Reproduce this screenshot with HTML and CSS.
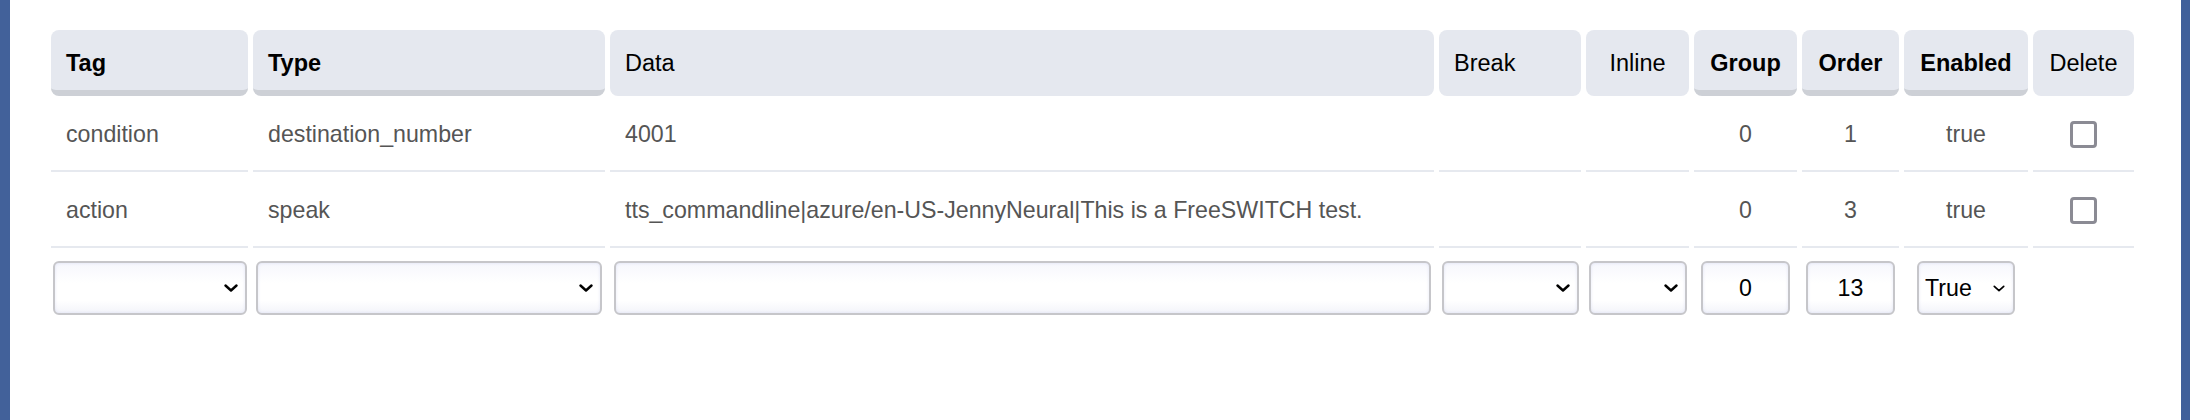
FILE: index.html
```html
<!DOCTYPE html>
<html lang="en">
<head>
<meta charset="utf-8">
<title>Dialplan details</title>
<link rel="stylesheet" href="styles.css">
</head>
<body>
<div class="frame">
  <div class="grid">
    <div class="th sort">Tag</div>
    <div class="th sort">Type</div>
    <div class="th">Data</div>
    <div class="th">Break</div>
    <div class="th center">Inline</div>
    <div class="th sort center">Group</div>
    <div class="th sort center">Order</div>
    <div class="th sort center">Enabled</div>
    <div class="th center">Delete</div>

    <div class="td">condition</div>
    <div class="td">destination_number</div>
    <div class="td">4001</div>
    <div class="td"></div>
    <div class="td"></div>
    <div class="td center">0</div>
    <div class="td center">1</div>
    <div class="td center">true</div>
    <div class="td center"><input class="check" type="checkbox"></div>

    <div class="td">action</div>
    <div class="td">speak</div>
    <div class="td">tts_commandline|azure/en-US-JennyNeural|This is a FreeSWITCH test.</div>
    <div class="td"></div>
    <div class="td"></div>
    <div class="td center">0</div>
    <div class="td center">3</div>
    <div class="td center">true</div>
    <div class="td center"><input class="check" type="checkbox"></div>

    <div class="ti"><span class="sel w-tag"><select class="field"><option></option></select><svg class="chev" viewBox="0 0 14 8"><path d="M1.5 1.5 L7 6.5 L12.5 1.5"/></svg></span></div>
    <div class="ti"><span class="sel w-type"><select class="field"><option></option></select><svg class="chev" viewBox="0 0 14 8"><path d="M1.5 1.5 L7 6.5 L12.5 1.5"/></svg></span></div>
    <div class="ti"><input class="field w-data" type="text"></div>
    <div class="ti"><span class="sel w-break"><select class="field"><option></option></select><svg class="chev" viewBox="0 0 14 8"><path d="M1.5 1.5 L7 6.5 L12.5 1.5"/></svg></span></div>
    <div class="ti"><span class="sel w-inline"><select class="field"><option></option></select><svg class="chev" viewBox="0 0 14 8"><path d="M1.5 1.5 L7 6.5 L12.5 1.5"/></svg></span></div>
    <div class="ti"><input class="field num w-group" type="text" value="0"></div>
    <div class="ti"><input class="field num w-order" type="text" value="13"></div>
    <div class="ti"><span class="sel w-enabled"><select class="field small"><option>True</option></select><svg class="chev sm" viewBox="0 0 14 8"><path d="M1.5 1.5 L7 6.5 L12.5 1.5"/></svg></span></div>
    <div class="ti"></div>
  </div>
</div>
</body>
</html>
```

FILE: styles.css
```css
html, body {
  margin: 0;
  padding: 0;
  background: #ffffff;
}

body {
  font-family: "Liberation Sans", Arial, Helvetica, sans-serif;
  font-size: 23.5px;
}

.frame {
  box-sizing: border-box;
  height: 420px;
  border-left: 10px solid #42619a;
  border-right: 9px solid #40609a;
  padding: 30px 0 0 41px;
  background: #ffffff;
}

.grid {
  display: grid;
  grid-template-columns: 197px 352px 824px 142px 103px 103px 97px 124px 101px;
  column-gap: 5px;
}

.th {
  box-sizing: border-box;
  height: 66px;
  padding: 6px 15px 6px 15px;
  background: #e5e8ef;
  border-radius: 8px;
  color: #000000;
  font-weight: normal;
  display: flex;
  align-items: center;
  white-space: nowrap;
}

.th.sort {
  font-weight: bold;
  border-bottom: 6px solid #cdd0d6;
  padding-bottom: 0;
}

.th.center {
  justify-content: center;
  padding-left: 0;
  padding-right: 0;
}

.td {
  box-sizing: border-box;
  height: 76px;
  padding: 2px 15px 0 15px;
  border-bottom: 2px solid #e6e9ef;
  color: #555555;
  font-size: 23.2px;
  display: flex;
  align-items: center;
  white-space: nowrap;
}

.td.center {
  justify-content: center;
  padding-left: 0;
  padding-right: 0;
}

.check {
  -webkit-appearance: none;
  appearance: none;
  box-sizing: border-box;
  width: 27px;
  height: 27px;
  margin: 0;
  border: 3px solid #8b8b94;
  border-radius: 4px;
  background: #ffffff;
}

.ti {
  padding-top: 13px;
  display: flex;
  justify-content: center;
}

.sel {
  position: relative;
  display: block;
  height: 54px;
}

.field {
  -webkit-appearance: none;
  appearance: none;
  box-sizing: border-box;
  height: 54px;
  width: 100%;
  margin: 0;
  border: 2px solid #c6c6ca;
  border-radius: 6px;
  background: linear-gradient(#f6f7fd, #ffffff 40%, #ffffff 75%, #f3f4fa);
  box-shadow: inset 0 0 3px rgba(150, 160, 220, 0.25);
  font-family: "Liberation Sans", Arial, Helvetica, sans-serif;
  font-size: 23.2px;
  color: #000000;
  padding: 0 6px;
  outline: none;
}

.field.num {
  text-align: center;
}

.chev {
  position: absolute;
  right: 9px;
  top: 23px;
  width: 14px;
  height: 8px;
  fill: none;
  stroke: #000000;
  stroke-width: 2.4;
  stroke-linecap: round;
  stroke-linejoin: round;
  pointer-events: none;
}

.chev.sm {
  width: 12px;
  height: 7px;
  right: 10px;
  top: 24px;
  stroke-width: 2;
}

.w-tag { width: 194px; }
.w-type { width: 346px; }
.w-data { width: 817px; }
.w-break { width: 137px; }
.w-inline { width: 98px; }
.w-group { width: 89px; }
.w-order { width: 89px; }
.w-enabled { width: 98px; }
```
